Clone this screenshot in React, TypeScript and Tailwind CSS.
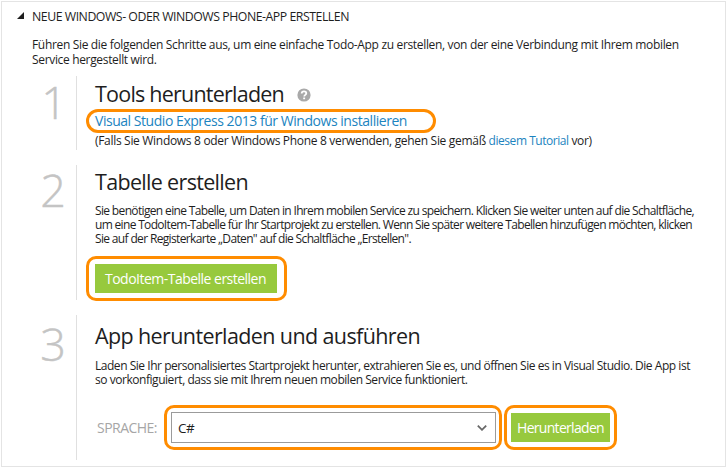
import type { ReactNode } from "react";

const TITLE = "text-[21.5px] leading-[29px] text-[#1e1e1e]";

function Step({
  number,
  inset,
  className,
  children,
}: {
  number: string;
  inset: string;
  className: string;
  children: ReactNode;
}) {
  return (
    <section className={`flex ${className}`}>
      <div
        className={`w-[74px] shrink-0 text-right text-[45px] leading-[46px] font-light text-[#c4c4c4] [-webkit-text-stroke:0.4px_#c4c4c4] ${inset}`}
      >
        {number}
      </div>
      <div className="-mt-[var(--lift)] h-[var(--rule)] w-px shrink-0 bg-[#e0e0e0]" />
      <div className="grow">{children}</div>
    </section>
  );
}

function HelpIcon() {
  return (
    <svg className="mt-[9px] size-[14px] shrink-0" viewBox="0 0 14 14">
      <circle cx="7" cy="7" r="6.6" fill="#a9a9a9" />
      <path d="M4.7 5.5C4.7 4.1 5.6 3.4 7 3.4s2.3.7 2.3 1.9c0 1.5-2.1 1.6-2.1 3.3" fill="none" stroke="#fff" strokeWidth="1.8" />
      <rect x="6.2" y="9.5" width="1.9" height="1.7" fill="#fff" />
    </svg>
  );
}

export default function App() {
  return (
    <div className="h-[468px] w-[727px] overflow-hidden bg-white p-px font-['Open_Sans','Noto_Sans',sans-serif] text-[#1e1e1e]">
      <main className="h-[466px] w-[725px] border border-[#e4e4e4] pt-[7px] whitespace-nowrap">
        <header className="flex pl-[15px] text-[12.3px] leading-[16px] tracking-[-0.465px]">
          <svg className="mt-[3px] h-[7px] w-[7px]" viewBox="0 0 7 7">
            <path d="M7 0V7H0Z" fill="#1e1e1e" />
          </svg>
          <h1 className="ml-[8px]">NEUE WINDOWS- ODER WINDOWS PHONE-APP ERSTELLEN</h1>
        </header>

        <p className="mt-[12px] ml-[30px] text-[12px] leading-[15px] tracking-[-0.335px]">
          Führen Sie die folgenden Schritte aus, um eine einfache Todo-App zu erstellen, von der eine Verbindung mit Ihrem mobilen
          <br />
          Service hergestellt wird.
        </p>

        <Step number="1" inset="pr-[9px]" className="mt-[12px] h-[71px] [--lift:3px] [--rule:74px]">
          <div className="flex pl-[18px]">
            <h2 className={`${TITLE} tracking-[-0.774px]`}>Tools herunterladen</h2>
            <div className="ml-[13px]">
              <HelpIcon />
            </div>
          </div>
          <div className="mt-px ml-[9px] flex h-[24px] w-[350px] items-center rounded-[12px] border-[3px] border-[#ff8c00] pl-[6px]">
            <a className="text-[14px] leading-[18px] tracking-[-0.46px] text-[#1c84c0]">
              Visual Studio Express 2013 für Windows installieren
            </a>
          </div>
          <p className="pl-[18px] text-[12px] leading-[15px] tracking-[-0.31px]">
            (Falls Sie Windows 8 oder Windows Phone 8 verwenden, gehen Sie gemäß{" "}
            <a className="tracking-[-0.459px] text-[#1c84c0]">diesem Tutorial</a> vor)
          </p>
        </Step>

        <Step number="2" inset="pr-[10px]" className="mt-[17px] h-[133px] [--lift:2px] [--rule:135px]">
          <h2 className={`${TITLE} pl-[18px] tracking-[-0.676px]`}>Tabelle erstellen</h2>
          <div className="mt-[8px] pl-[18px] text-[12px] leading-[14px]">
            <p className="tracking-[-0.651px]">
              Sie benötigen eine Tabelle, um Daten in Ihrem mobilen Service zu speichern. Klicken Sie weiter unten auf die Schaltfläche,
            </p>
            <p className="tracking-[-0.675px]">
              um eine TodoItem-Tabelle für Ihr Startprojekt zu erstellen. Wenn Sie später weitere Tabellen hinzufügen möchten, klicken
            </p>
            <p className="tracking-[-0.653px]">
              Sie auf der Registerkarte „Daten" auf die Schaltfläche „Erstellen".
            </p>
          </div>
          <div className="mt-[10px] ml-[9px] h-[45px] w-[201px] rounded-[10px] border-[3px] border-[#ff8c00] pt-[5px] pl-[6px]">
            <button className="block h-[29px] w-[182px] bg-[#97c93d] pl-[10px] text-left text-[14px] leading-[27px] tracking-[-0.517px] text-white">
              TodoItem-Tabelle erstellen
            </button>
          </div>
        </Step>

        <Step number="3" inset="pr-[10px]" className="mt-[21px] h-[139px] [--lift:6px] [--rule:145px]">
          <h2 className={`${TITLE} pl-[18px] tracking-[-0.61px]`}>App herunterladen und ausführen</h2>
          <div className="mt-[9px] pl-[18px] text-[12px] leading-[14px]">
            <p className="tracking-[-0.467px]">
              Laden Sie Ihr personalisiertes Startprojekt herunter, extrahieren Sie es, und öffnen Sie es in Visual Studio. Die App ist
            </p>
            <p className="tracking-[-0.458px]">
              so vorkonfiguiert, dass sie mit Ihrem neuen mobilen Service funktioniert.
            </p>
          </div>
          <div className="mt-[18px] flex h-[45px] items-center pl-[20px]">
            <label className="w-[67px] text-[14px] leading-[20px] tracking-[-0.525px] text-[#a6a6a6]">SPRACHE:</label>
            <div className="h-[45px] w-[338px] rounded-[10px] border-[3px] border-[#ff8c00] pt-[4px] pl-[4px]">
              <div className="flex h-[31px] w-[325px] items-center justify-between border border-[#9b9b9b] pr-[8px] pl-[6px]">
                <span className="text-[13.5px] leading-[20px] tracking-[-0.4px]">C#</span>
                <svg className="h-[6px] w-[10px]" viewBox="0 0 10 6" fill="none" stroke="#686868" strokeWidth="1.8">
                  <path d="M.8.7 5 4.8 9.2.7" />
                </svg>
              </div>
            </div>
            <div className="ml-[2px] h-[45px] w-[113px] rounded-[10px] border-[3px] border-[#ff8c00] pt-[5px] pl-[4px]">
              <button className="block h-[29px] w-[99px] bg-[#97c93d] pl-[6px] text-left text-[14px] leading-[30px] tracking-[-0.691px] text-white">
                Herunterladen
              </button>
            </div>
          </div>
        </Step>
      </main>
    </div>
  );
}
